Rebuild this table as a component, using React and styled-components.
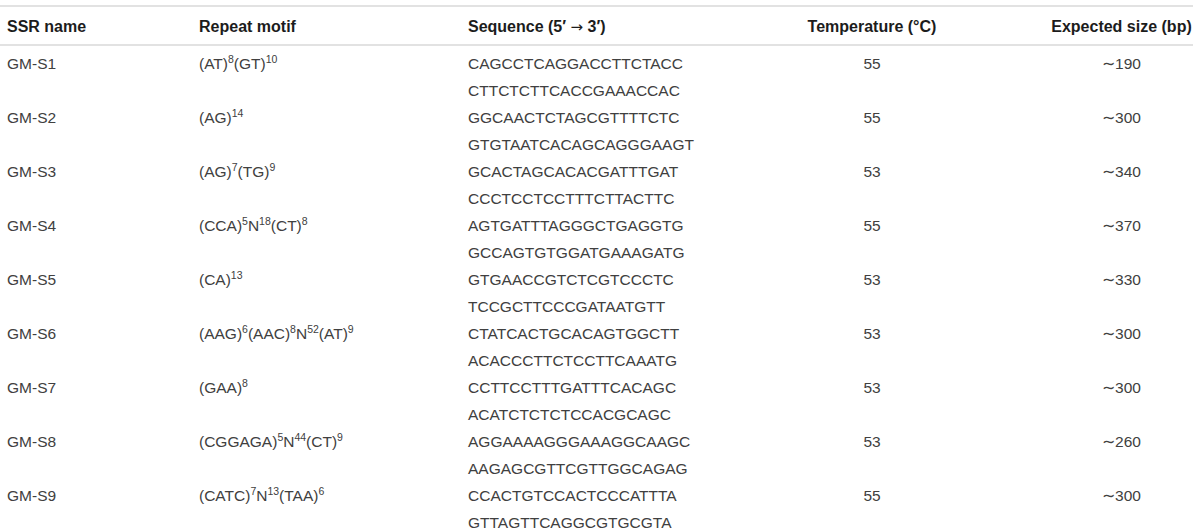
import styled, { createGlobalStyle } from 'styled-components';

const rows = [
    { name: 'GM-S1', motif: [['(AT)', '8'], ['(GT)', '10']], seq: ['CAGCCTCAGGACCTTCTACC', 'CTTCTCTTCACCGAAACCAC'], temp: 55, size: 190 },
    { name: 'GM-S2', motif: [['(AG)', '14']], seq: ['GGCAACTCTAGCGTTTTCTC', 'GTGTAATCACAGCAGGGAAGT'], temp: 55, size: 300 },
    { name: 'GM-S3', motif: [['(AG)', '7'], ['(TG)', '9']], seq: ['GCACTAGCACACGATTTGAT', 'CCCTCCTCCTTTCTTACTTC'], temp: 53, size: 340 },
    { name: 'GM-S4', motif: [['(CCA)', '5'], ['N', '18'], ['(CT)', '8']], seq: ['AGTGATTTAGGGCTGAGGTG', 'GCCAGTGTGGATGAAAGATG'], temp: 55, size: 370 },
    { name: 'GM-S5', motif: [['(CA)', '13']], seq: ['GTGAACCGTCTCGTCCCTC', 'TCCGCTTCCCGATAATGTT'], temp: 53, size: 330 },
    { name: 'GM-S6', motif: [['(AAG)', '6'], ['(AAC)', '8'], ['N', '52'], ['(AT)', '9']], seq: ['CTATCACTGCACAGTGGCTT', 'ACACCCTTCTCCTTCAAATG'], temp: 53, size: 300 },
    { name: 'GM-S7', motif: [['(GAA)', '8']], seq: ['CCTTCCTTTGATTTCACAGC', 'ACATCTCTCTCCACGCAGC'], temp: 53, size: 300 },
    { name: 'GM-S8', motif: [['(CGGAGA)', '5'], ['N', '44'], ['(CT)', '9']], seq: ['AGGAAAAGGGAAAGGCAAGC', 'AAGAGCGTTCGTTGGCAGAG'], temp: 53, size: 260 },
    { name: 'GM-S9', motif: [['(CATC)', '7'], ['N', '13'], ['(TAA)', '6']], seq: ['CCACTGTCCACTCCCATTTA', 'GTTAGTTCAGGCGTGCGTA'], temp: 55, size: 300 },
];

export default function App() {
    return (
        <>
            <GlobalStyle />
            <Table>
                <Head>
                    <Cell>SSR name</Cell>
                    <Cell>Repeat motif</Cell>
                    <Cell>Sequence (5′ <Arrow>→</Arrow> 3′)</Cell>
                    <Cell align="center">Temperature (°C)</Cell>
                    <Cell align="center">Expected size (bp)</Cell>
                </Head>
                <Body>
                    {rows.map((r) => (
                        <Row key={r.name}>
                            <Cell>{r.name}</Cell>
                            <Cell>
                                {r.motif.map(([base, exp], i) => (
                                    <span key={i}>{base}<Sup>{exp}</Sup></span>
                                ))}
                            </Cell>
                            <Cell>
                                {r.seq.map((s) => <div key={s}>{s}</div>)}
                            </Cell>
                            <Cell align="center">{r.temp}</Cell>
                            <Cell align="center">∼{r.size}</Cell>
                        </Row>
                    ))}
                </Body>
            </Table>
        </>
    )
}

const GlobalStyle = createGlobalStyle`
    body {
        margin: 0;
        background: #fff;
        font-family: "Liberation Sans", Arial, sans-serif;
    }
`

const Table = styled.div`
    width: 1193px;
    margin-top: 5px;
    border-top: 2px solid #e2e2e2;
`

const grid = `
    display: grid;
    grid-template-columns: 192px 269px 226px 356px 143px;
    padding-left: 7px;
`

const Head = styled.div`
    ${grid}
    height: 39px;
    padding-top: 2px;
    box-sizing: border-box;
    align-items: center;
    border-bottom: 2px solid #e2e2e2;
    font-size: 16px;
    font-weight: bold;
    color: #1c1c1c;
    white-space: nowrap;
`

const Arrow = styled.span`
    font-family: "DejaVu Sans", sans-serif;
    font-weight: normal;
    font-size: 15px;
`

const Body = styled.div`
    padding-top: 4px;
    font-size: 15.5px;
    line-height: 27px;
    color: #404040;
`

const Row = styled.div`
    ${grid}
    white-space: nowrap;
`

const Cell = styled.div`
    text-align: ${props => props.align || 'left'};
`

const Sup = styled.sup`
    font-size: 10.5px;
    line-height: 0;
    vertical-align: 6px;
`
